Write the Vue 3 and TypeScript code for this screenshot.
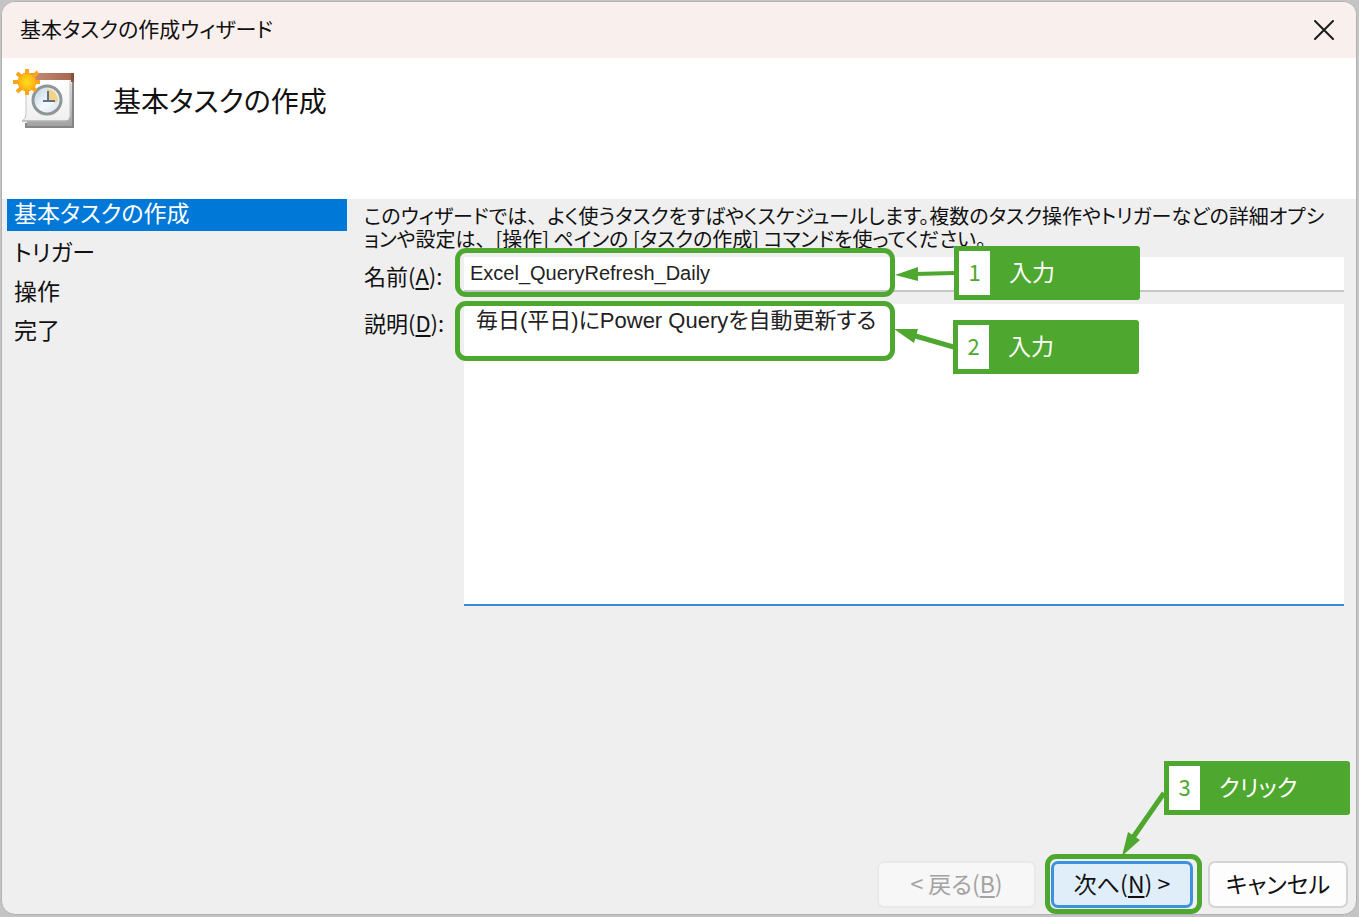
<script setup lang="ts">
import { ref } from 'vue'

const steps: string[] = ['基本タスクの作成', 'トリガー', '操作', '完了']
const current = ref(0)
const taskName = ref('Excel_QueryRefresh_Daily')
const description = ref('毎日(平日)にPower Queryを自動更新する')
</script>

<template>
  <div class="desktop">
    <main class="window">
      <header class="titlebar">
        <span class="title">基本タスクの作成ウィザード</span>
        <button class="close" type="button" aria-label="閉じる">
          <svg width="20" height="20" viewBox="0 0 20 20">
            <path d="M1 1L19 19M19 1L1 19" fill="none" stroke="#1c1c1c" stroke-width="2" stroke-linecap="round" />
          </svg>
        </button>
      </header>

      <section class="banner">
        <svg class="task-icon" width="64" height="62" viewBox="0 0 64 62" aria-hidden="true">
          <defs>
            <linearGradient id="wood" x1="0" x2="1" y1="0" y2="0">
              <stop offset="0" stop-color="#c6927c" />
              <stop offset="1" stop-color="#a4654e" />
            </linearGradient>
            <linearGradient id="stack" x1="0" x2="0" y1="0" y2="1">
              <stop offset="0" stop-color="#dedede" />
              <stop offset="1" stop-color="#a0a0a0" />
            </linearGradient>
            <linearGradient id="paper" x1="0" x2="0" y1="0" y2="1">
              <stop offset="0" stop-color="#ffffff" />
              <stop offset="1" stop-color="#efefef" />
            </linearGradient>
            <linearGradient id="face" x1="0" x2="1" y1="0" y2="1">
              <stop offset="0" stop-color="#b9cfe2" />
              <stop offset="0.55" stop-color="#f4f9fd" />
              <stop offset="1" stop-color="#cfe0ee" />
            </linearGradient>
            <radialGradient id="sun">
              <stop offset="0" stop-color="#ffe01c" />
              <stop offset="1" stop-color="#ffb010" />
            </radialGradient>
          </defs>
          <path d="M13 54V58H60V12" fill="url(#stack)" stroke="#858585" stroke-width="2" />
          <path d="M13 8H57V48Q57 52 53 52H9Q13 50 13 45Z" fill="url(#paper)" stroke="#c4c4c4" />
          <path d="M9 52H53Q57 52 57 48" fill="none" stroke="#a9a9a9" stroke-width="1" />
          <path d="M13 4H61V11H13Z" fill="url(#wood)" />
          <path d="M58 4H61V13H58Z" fill="#85523f" />
          <circle cx="34" cy="31" r="14" fill="url(#face)" stroke="#8f9699" stroke-width="3" />
          <path d="M34 31V20A11 11 0 0 1 45 31L43 34Z" fill="#f1d38a" />
          <path d="M35 22V33M30 32H42" fill="none" stroke="#5f7484" stroke-width="2" />
          <path d="M14 0V26M0 13H27M4 4L23 22M25 3L4 23" fill="none" stroke="#fba51c" stroke-width="4" />
          <circle cx="14" cy="13" r="9" fill="url(#sun)" stroke="#fba51c" />
        </svg>
        <h1>基本タスクの作成</h1>
      </section>

      <div class="content">
        <nav class="steps" aria-label="手順">
          <a
            v-for="(step, i) in steps"
            :key="step"
            href="#"
            :class="['step', { active: i === current }]"
            @click.prevent
          >{{ step }}</a>
        </nav>

        <form class="form" @submit.prevent>
          <p class="intro">
            このウィザードでは<span class="full">、</span>よく使うタスクをすばやくスケジュールします。複数のタスク操作やトリガーなどの詳細オプシ<br />ョンや設定は<span class="full">、</span>[操作] ペインの [タスクの作成] コマンドを使ってください。
          </p>

          <div class="row name-row">
            <label for="task-name">名前(<u>A</u>):</label>
            <div class="field">
              <input id="task-name" v-model="taskName" type="text" />
              <span class="mark mark-name"></span>
              <div class="callout callout-name">
                <svg class="arrow" width="60" height="20" viewBox="0 0 60 20">
                  <path d="M60 9L20 10" stroke="#4ea72e" stroke-width="4" />
                  <path d="M0 11L23 3V17Z" fill="#4ea72e" />
                </svg>
                <b>1</b><span>入力</span>
              </div>
            </div>
          </div>

          <div class="row">
            <label for="task-desc">説明(<u>D</u>):</label>
            <div class="field">
              <textarea id="task-desc" v-model="description" spellcheck="false"></textarea>
              <span class="mark mark-desc"></span>
              <div class="callout callout-desc">
                <svg class="arrow" width="60" height="28" viewBox="0 0 60 28">
                  <path d="M60 21L18 9" stroke="#4ea72e" stroke-width="5" />
                  <path d="M0 3L24 3L20 17Z" fill="#4ea72e" />
                </svg>
                <b>2</b><span>入力</span>
              </div>
            </div>
          </div>
        </form>
      </div>

      <footer class="actions">
        <button class="btn" type="button" disabled>&lt; 戻る(<u>B</u>)</button>
        <div class="next-wrap">
          <button class="btn next" type="button">次へ(<u>N</u>) &gt;</button>
          <span class="mark mark-next"></span>
          <div class="callout callout-next">
            <svg class="arrow" width="46" height="68" viewBox="0 0 46 68">
              <path d="M44 4L12 50" stroke="#4ea72e" stroke-width="5" />
              <path d="M2 67L8 43L20 51Z" fill="#4ea72e" />
            </svg>
            <b>3</b><span>クリック</span>
          </div>
        </div>
        <button class="btn" type="button">キャンセル</button>
      </footer>
    </main>
  </div>
</template>

<style>
body {
  background: #c4c4c4;
}
</style>

<style scoped>
.desktop {
  box-sizing: border-box;
  min-height: 100vh;
  display: flex;
  padding: 1px 2px 2px 1px;
  font-family: 'Noto Sans CJK JP', sans-serif;
  font-feature-settings: 'palt';
  color: #111;
}
.desktop *,
.desktop *::before {
  box-sizing: border-box;
}
.window {
  flex: 1;
  min-width: 0;
  display: flex;
  flex-direction: column;
  background: #efefef;
  border: 1px solid #b2b2b2;
  border-radius: 14px;
}
.titlebar {
  display: flex;
  align-items: center;
  justify-content: space-between;
  height: 56px;
  padding: 0 22px 0 18px;
  background: #f9f0ed;
  border-radius: 13px 13px 0 0;
}
.title {
  padding-bottom: 4px;
  font-size: 21px;
  line-height: 28px;
}
.close {
  display: flex;
  padding: 0;
  border: 0;
  background: none;
}
.banner {
  display: flex;
  align-items: flex-start;
  gap: 36px;
  height: 141px;
  padding: 11px 11px 0;
  background: #fff;
}
h1 {
  margin: 10px 0 0;
  font-size: 28px;
  line-height: 42px;
  font-weight: 400;
}
.content {
  display: flex;
  gap: 17px;
  padding: 0 12px 0 5px;
}
.steps {
  flex: none;
  display: flex;
  flex-direction: column;
  gap: 7px;
  width: 340px;
}
.step {
  height: 32px;
  padding-left: 7px;
  font-size: 23px;
  line-height: 26px;
  color: #111;
  text-decoration: none;
}
.step.active {
  background: #0078d7;
  color: #fff;
}
.form {
  flex: 1;
  min-width: 0;
  padding-top: 5px;
}
.intro {
  margin: 0;
  font-size: 20px;
  line-height: 23px;
  word-break: break-all;
}
.full {
  font-feature-settings: normal;
}
.row {
  display: flex;
}
.name-row {
  margin: 7px 0 12px;
}
label {
  flex: none;
  width: 100px;
  padding-top: 2px;
  font-size: 22px;
  line-height: 32px;
}
u {
  text-decoration-thickness: 2px;
  text-underline-offset: 3px;
}
.field {
  position: relative;
  flex: 1;
  min-width: 0;
  display: flex;
}
input,
textarea {
  width: 100%;
  margin: 0;
  border: 0;
  border-radius: 0;
  outline: 0;
  background: #fff;
  color: #222;
  font-family: 'Liberation Sans', 'Noto Sans CJK JP', sans-serif;
  font-size: 22px;
  font-feature-settings: 'palt';
}
input {
  height: 35px;
  padding: 0 6px;
  border-bottom: 2px solid #c6c6c6;
  font-size: 20px;
}
textarea {
  height: 302px;
  padding: 1px 12px;
  border-bottom: 2px solid #3a8ad6;
  line-height: 32px;
  resize: none;
}
.mark {
  position: absolute;
  border: 5px solid #4ea72e;
  border-radius: 11px;
  pointer-events: none;
}
.mark-name {
  left: -9px;
  top: -9px;
  width: 440px;
  height: 49px;
}
.mark-desc {
  left: -9px;
  top: -3px;
  width: 440px;
  height: 60px;
}
.mark-next {
  inset: -7px -9px -6px -6px;
}
.callout {
  position: absolute;
  display: flex;
  align-items: flex-start;
  gap: 19px;
  width: 186px;
  height: 54px;
  padding: 5px;
  border-radius: 0 3px 3px 0;
  background: #4ea72e;
  color: #fff;
  font-size: 23px;
  line-height: 40px;
}
.callout b {
  width: 31px;
  height: 44px;
  background: #fff;
  color: #4ea72e;
  font-size: 22px;
  font-weight: 400;
  text-align: center;
}
.callout-name {
  left: 490px;
  top: -11px;
}
.callout-desc {
  left: 489px;
  top: 16px;
}
.callout-next {
  left: 113px;
  top: -100px;
}
.arrow {
  position: absolute;
  right: 185px;
  top: 18px;
}
.callout-desc .arrow {
  top: 6px;
}
.callout-next .arrow {
  right: 184px;
  top: 28px;
}
.actions {
  display: flex;
  align-items: center;
  justify-content: flex-end;
  gap: 15px;
  margin-top: auto;
  padding: 0 8px 6px 0;
}
.next-wrap {
  position: relative;
}
.btn {
  display: block;
  width: 140px;
  height: 47px;
  padding: 0 0 3px;
  border: 2px solid #d4d4d4;
  border-radius: 7px;
  background: #fdfdfd;
  color: #111;
  font: inherit;
  font-size: 23px;
  line-height: 36px;
  font-feature-settings: 'palt';
}
.btn:disabled {
  width: 159px;
  background: #f7f7f7;
  border-color: #e9e9e9;
  color: #a3a3a3;
}
.btn.next {
  width: 142px;
  border: 3px solid #3c92dc;
  background: #e0eefa;
}
</style>
